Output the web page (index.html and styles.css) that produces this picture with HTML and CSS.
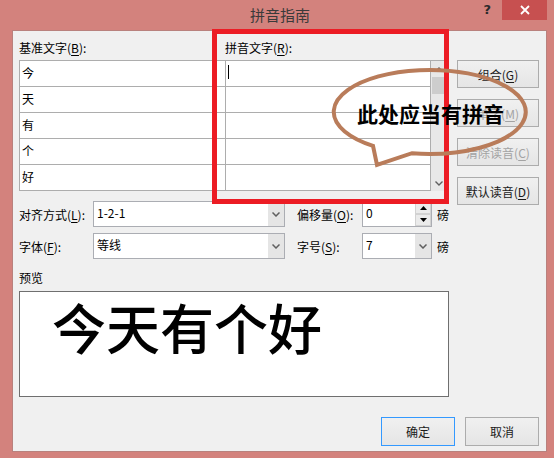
FILE: index.html
```html
<!DOCTYPE html>
<html lang="zh-CN">
<head>
<meta charset="utf-8">
<title>拼音指南</title>
<link rel="stylesheet" href="styles.css">
</head>
<body>
<div class="window">
  <div class="titlebar">
    <span></span>
    <span class="title">拼音指南</span>
    <div class="controls">
      <span class="help">?</span>
      <span class="close"><svg width="10" height="10" viewBox="0 0 10 10"><path d="M1 1L9 9M9 1L1 9" stroke="#fff" stroke-width="1.8"/></svg></span>
    </div>
  </div>
  <div class="dialog">
    <div class="main">
      <div class="lists">
        <div class="label">基准文字(<u>B</u>):</div>
        <div class="label label-ruby">拼音文字(<u>R</u>):</div>
        <div class="table">
          <div class="col col-base">
            <div class="cell">今</div>
            <div class="cell">天</div>
            <div class="cell">有</div>
            <div class="cell">个</div>
            <div class="cell">好</div>
          </div>
          <div class="col col-ruby">
            <div class="cell"><span class="caret"></span></div>
            <div class="cell"></div>
            <div class="cell"></div>
            <div class="cell"></div>
            <div class="cell"></div>
          </div>
          <div class="scrollbar">
            <div class="sb-btn"><svg width="8" height="5" viewBox="0 0 8 5"><path d="M0.5 4.5L4 1L7.5 4.5" fill="none" stroke="#606060" stroke-width="1.4"/></svg></div>
            <div class="sb-track"><div class="sb-thumb"></div></div>
            <div class="sb-btn"><svg width="8" height="5" viewBox="0 0 8 5"><path d="M0.5 0.5L4 4L7.5 0.5" fill="none" stroke="#606060" stroke-width="1.4"/></svg></div>
          </div>
        </div>
      </div>

      <div class="form">
        <div class="form-row">
          <span class="flabel">对齐方式(<u>L</u>):</span>
          <div class="combo combo-wide">
            <span class="value">1-2-1</span>
            <span class="drop"><svg width="8" height="5" viewBox="0 0 8 5"><path d="M0.5 0.5L4 4L7.5 0.5" fill="none" stroke="#5f5f5f" stroke-width="1.5"/></svg></span>
          </div>
          <span class="flabel flabel2">偏移量(<u>O</u>):</span>
          <div class="combo combo-small">
            <span class="value">0</span>
            <span class="spin">
              <span class="spin-btn"><svg width="7" height="4" viewBox="0 0 7 4"><path d="M0 4L3.5 0L7 4Z" fill="#000"/></svg></span>
              <span class="spin-btn"><svg width="7" height="4" viewBox="0 0 7 4"><path d="M0 0L3.5 4L7 0Z" fill="#000"/></svg></span>
            </span>
          </div>
          <span class="unit">磅</span>
        </div>
        <div class="form-row">
          <span class="flabel">字体(<u>F</u>):</span>
          <div class="combo combo-wide">
            <span class="value">等线</span>
            <span class="drop"><svg width="8" height="5" viewBox="0 0 8 5"><path d="M0.5 0.5L4 4L7.5 0.5" fill="none" stroke="#5f5f5f" stroke-width="1.5"/></svg></span>
          </div>
          <span class="flabel flabel2">字号(<u>S</u>):</span>
          <div class="combo combo-small">
            <span class="value">7</span>
            <span class="drop"><svg width="8" height="5" viewBox="0 0 8 5"><path d="M0.5 0.5L4 4L7.5 0.5" fill="none" stroke="#5f5f5f" stroke-width="1.5"/></svg></span>
          </div>
          <span class="unit">磅</span>
        </div>
      </div>

      <div class="preview-label">预览</div>
      <div class="preview">今天有个好</div>
    </div>

    <div class="side">
      <button class="btn">组合(<u>G</u>)</button>
      <button class="btn disabled">单字(<u>M</u>)</button>
      <button class="btn disabled">清除读音(<u>C</u>)</button>
      <button class="btn">默认读音(<u>D</u>)</button>
    </div>

    <div class="footer">
      <button class="btn btn-foot default">确定</button>
      <button class="btn btn-foot">取消</button>
    </div>
  </div>

  <div class="redbox"></div>
  <svg class="bubble" width="554" height="458" viewBox="0 0 554 458">
    <path d="M373 145.8 A96 42 0 1 1 412 153.2 L377 165 Z" fill="none" stroke="#b97c5a" stroke-width="4" stroke-linejoin="miter"/>
  </svg>
  <div class="bubble-text">此处应当有拼音</div>
</div>
</body>
</html>
```

FILE: styles.css
```css
* { box-sizing: border-box; }
html, body { margin: 0; padding: 0; }
body {
  width: 554px;
  height: 458px;
  overflow: hidden;
  font-family: "Noto Sans CJK SC", "Noto Sans", sans-serif;
  font-size: 12px;
  color: #000;
}
u { text-decoration: underline; text-underline-offset: 2px; }

.window {
  position: relative;
  width: 554px;
  height: 458px;
  background: #d3827d;
}

.titlebar {
  height: 30px;
  display: grid;
  grid-template-columns: 1fr auto 1fr;
}
.title {
  align-self: center;
  font-size: 15px;
  line-height: 20px;
  color: #3a3a3a;
  padding-left: 6px;
}
.controls {
  display: flex;
  justify-content: flex-end;
  align-items: flex-start;
  padding-right: 7px;
}
.help {
  font-family: "DejaVu Sans", sans-serif;
  font-weight: 700;
  font-size: 13px;
  line-height: 20px;
  color: #2a2a2a;
  margin-right: 11px;
}
.close {
  width: 45px;
  height: 20px;
  background: #c75050;
  display: flex;
  align-items: center;
  justify-content: center;
}

.dialog {
  margin-left: 12px;
  width: 535px;
  height: 422px;
  background: #f0f0f0;
  border: 1px solid #b9817d;
  padding: 9px 7px 0 6px;
  display: grid;
  grid-template-columns: 430px 82px;
  column-gap: 8px;
  align-items: start;
}

.main { display: flex; flex-direction: column; }

.lists {
  display: grid;
  grid-template-columns: 206px 221px;
  row-gap: 4px;
}
.label { line-height: 16px; height: 16px; }
.table {
  grid-column: 1 / -1;
  display: grid;
  grid-template-columns: 206px 205px 16px;
  border-top: 1px solid #adadad;
}
.col { display: flex; flex-direction: column; background: #fff; }
.col-base { border-left: 1px solid #adadad; }
.col-ruby { border-left: 1px solid #adadad; }
.cell {
  height: 26px;
  border-bottom: 1px solid #adadad;
  padding-left: 2px;
  line-height: 24px;
  font-size: 12px;
  position: relative;
}
.caret {
  display: block;
  width: 1px;
  height: 14px;
  margin-top: 4px;
  background: #000;
}
.scrollbar {
  border-left: 1px solid #adadad;
  background: #e8e8e8;
  display: flex;
  flex-direction: column;
}
.sb-btn {
  height: 16px;
  display: flex;
  align-items: center;
  justify-content: center;
}
.sb-track { flex: 1; padding: 0 1px; }
.sb-thumb { height: 17px; background: #cdcdcd; }

.form {
  margin-top: 10px;
  display: flex;
  flex-direction: column;
  gap: 6px;
}
.form-row { display: flex; align-items: center; height: 26px; }
.flabel { width: 74px; white-space: nowrap; }
.flabel2 { width: 65px; margin-left: 12px; }
.combo {
  height: 26px;
  border: 1px solid #abadb3;
  background: #fff;
  display: flex;
  align-items: stretch;
}
.combo-wide { width: 192px; }
.combo-small { width: 70px; }
.value { flex: 1; padding-left: 3px; line-height: 16px; padding-top: 3px; }
.drop {
  width: 16px;
  background: #e5e5e5;
  display: flex;
  align-items: center;
  justify-content: center;
}
.spin {
  width: 16px;
  display: flex;
  flex-direction: column;
}
.spin-btn {
  flex: 1;
  background: #ebebeb;
  border: 1px solid #d2d2d2;
  display: flex;
  align-items: center;
  justify-content: center;
}
.unit { margin-left: 5px; }

.preview-label { margin-top: 11px; line-height: 16px; }
.preview {
  margin-top: 5px;
  height: 106px;
  border: 1px solid #6f6f6f;
  background: #fff;
  font-size: 54px;
  font-weight: 500;
  line-height: 54px;
  padding: 8px 0 0 32px;
}

.side {
  margin-top: 20px;
  display: flex;
  flex-direction: column;
  gap: 11px;
}
.btn {
  font-family: inherit;
  font-size: 12px;
  color: #1a1a1a;
  height: 28px;
  border: 1px solid #acacac;
  background: linear-gradient(#f0f0f0, #e5e5e5);
  padding: 0;
  margin: 0;
}
.btn.disabled { color: #a3a3a3; }

.footer {
  grid-column: 1 / -1;
  justify-self: end;
  margin-top: 15px;
  display: flex;
  gap: 10px;
}
.btn-foot { width: 74px; height: 29px; }
.btn-foot.default { border-color: #3399ff; }

.redbox {
  position: absolute;
  left: 212px;
  top: 29px;
  width: 237px;
  height: 175px;
  border: 5px solid #ec1c24;
}
.bubble {
  position: absolute;
  left: 0;
  top: 0;
  pointer-events: none;
}
.bubble-text {
  position: absolute;
  left: 357px;
  top: 103px;
  font-size: 21px;
  line-height: 21px;
  font-weight: 700;
  color: #000;
  white-space: nowrap;
}
```
